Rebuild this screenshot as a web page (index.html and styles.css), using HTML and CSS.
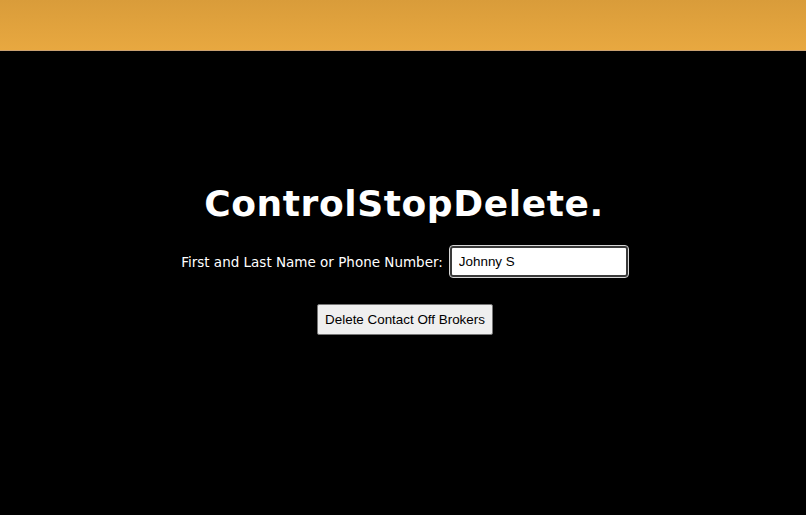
FILE: index.html
```html
<!DOCTYPE html>
<html lang="en">
<head>
    <meta charset="UTF-8">
    <meta name="viewport" content="width=device-width, initial-scale=1.0">
    <title>ControlStopDelete.</title>
    <link rel="stylesheet" href="styles.css">
</head>
<body>

    <div class="topbar"></div>

    <div class="main">
        <h1 class="brand">ControlStopDelete.</h1>

        <form class="lookup">
            <div class="field">
                <label for="who">First and Last Name or Phone Number:</label>
                <input type="text" id="who" value="Johnny S">
            </div>
            <button type="button" class="delete-btn">Delete Contact Off Brokers</button>
        </form>
    </div>

</body>
</html>
```

FILE: styles.css
```css
body {
    margin: 0;
    background-color: #000;
    color: #fff;
    font-family: "DejaVu Sans", Verdana, sans-serif;
}
.topbar {
    height: 50px;
    background: linear-gradient(#d99c3a, #e8a840);
    border-bottom: 1px solid #c9a070;
}
.main {
    display: flex;
    flex-direction: column;
    align-items: center;
    padding-top: 132px;
}
.brand {
    margin: 0 0 0 2px;
    font-size: 36px;
    font-weight: bold;
    letter-spacing: 0.6px;
    line-height: 42px;
}
.lookup {
    display: flex;
    flex-direction: column;
    align-items: center;
    margin-top: 20px;
    padding-left: 4px;
}
.field {
    display: flex;
    align-items: center;
    gap: 6px;
}
.field label {
    font-size: 13.5px;
}
.field input {
    width: 178px;
    height: 31px;
    box-sizing: border-box;
    padding: 0 7px;
    font-family: "Liberation Sans", Arial, sans-serif;
    font-size: 13.4px;
    color: #000;
    background-color: #fff;
    border: 2px solid #3a3a3a;
    border-radius: 3px;
    outline: 1px solid #d8d8d8;
    margin: 1px;
}
.delete-btn {
    margin-top: 26px;
    height: 31px;
    padding: 0 7px;
    white-space: nowrap;
    font-family: "Liberation Sans", Arial, sans-serif;
    font-size: 13.4px;
    color: #000;
    background-color: #efefef;
    border: 1px solid #767676;
    border-radius: 2px;
}
```
